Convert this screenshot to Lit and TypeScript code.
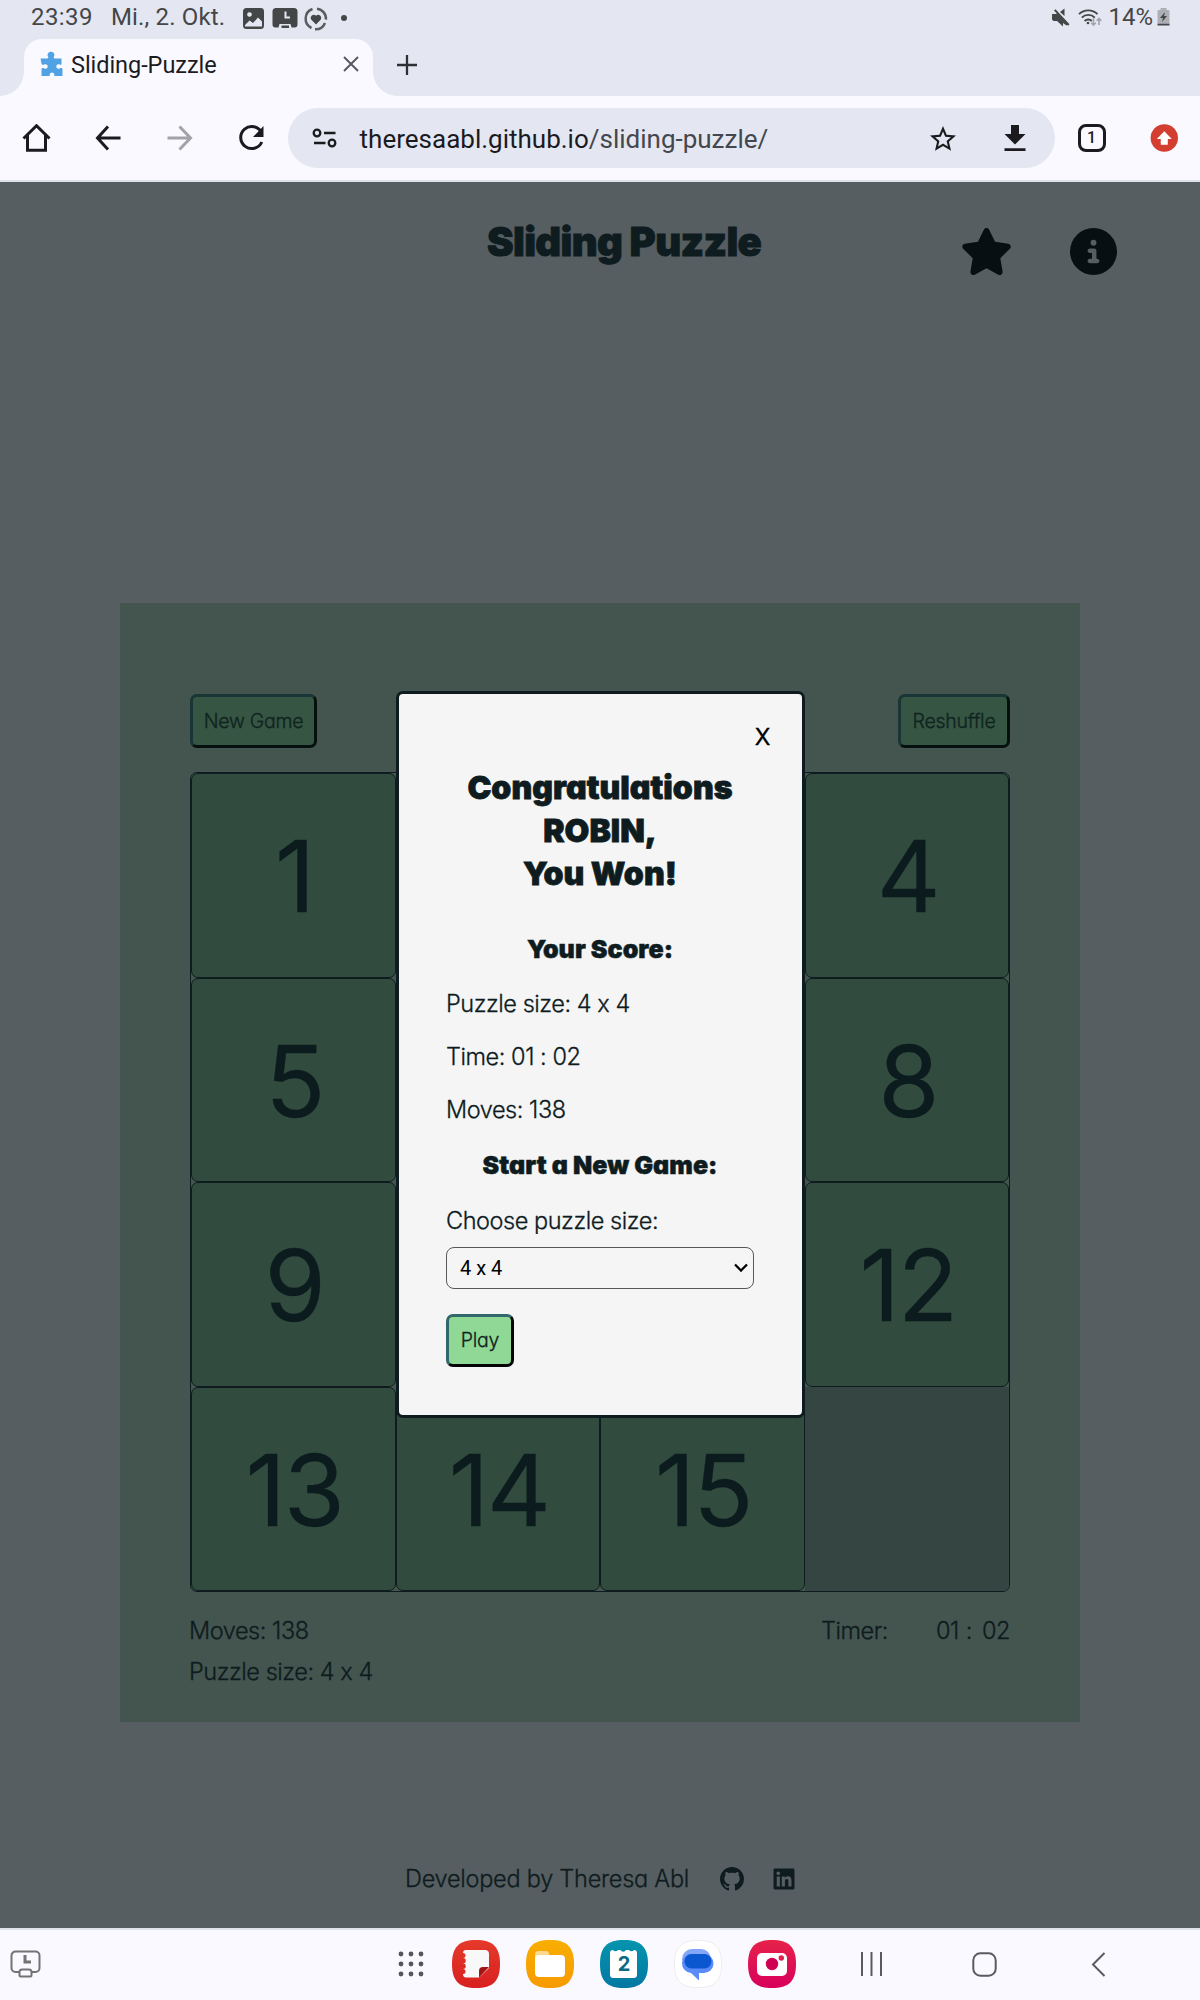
import { LitElement, html, svg, css } from "lit";
import { customElement } from "lit/decorators.js";

const app = (id: string, from: string, to: string, inner: unknown) => html`<svg viewBox="0 0 48 48" width="48" height="48">
  <defs>
    <linearGradient id=${id} x1="0" y1="0" x2="0" y2="1"><stop offset="0" stop-color=${from} /><stop offset="1" stop-color=${to} /></linearGradient>
  </defs>
  <path d="M24 0C41 0 48 7 48 24S41 48 24 48 0 41 0 24 7 0 24 0Z" fill=${`url(#${id})`} />
  ${inner}
</svg>`;

@customElement("system-status")
class SystemStatus extends LitElement {
  static styles = css`
    :host { display: flex; height: 39px; align-items: flex-start; background: #e4e7f1; color: #454648; font: 24px/35px Roboto, sans-serif; box-sizing: border-box; padding-left: 31px; }
    svg { display: block; flex: none; }
    .text { white-space: pre; display: block; }
    .clock { width: 80px; letter-spacing: 0.400px; }
    .date { width: 131px; letter-spacing: 0.150px; }
    .icons { display: flex; gap: 6px; padding-top: 7px; flex: 1; }
    .right { display: flex; padding-right: 30px; }
    .mute { margin: 8px 8px 0 0; }
    .wifi { margin: 8px 6px 0 0; }
    .percent { margin-right: 4px; }
    .battery { margin-top: 7px; }
  `;
  render() {
    return html`
      <span class="text clock">23:39</span>
      <span class="text date">Mi., 2. Okt.</span>
      <span class="icons">
        <svg width="24" height="24" viewBox="0 0 24 24"><path fill-rule="evenodd" fill="#454648" d="M4.500 1h14a3.500 3.500 0 0 1 3.500 3.500v14a3.500 3.500 0 0 1-3.500 3.500h-14a3.500 3.500 0 0 1-3.500-3.500v-14a3.500 3.500 0 0 1 3.500-3.500zM3 19.500h17v-5l-4-4-5 5.500-3.500-2.500-4.500 4.500zM7.500 5.200a2.300 2.300 0 1 0 .01 0z"/></svg>
        <svg width="26" height="24" viewBox="0 0 26 24"><path fill="#454648" d="M4 1h18a3.500 3.500 0 0 1 3.500 3.500v13a3 3 0 0 1-3 3h-3l-1-3.500h-11l-1 3.500h-3a3 3 0 0 1-3-3v-13a3.500 3.500 0 0 1 3.500-3.500z"/><path d="M13.500 4.500v6h4.500" fill="none" stroke="#e4e7f1" stroke-width="2"/><path d="M9.500 18.500h7.500v2.500h-7.500z" fill="#454648"/></svg>
        <svg width="24" height="24" viewBox="0 0 24 24"><g fill="none" stroke="#5c5d61" stroke-width="2.500"><path d="M8.500 2A10.300 10.300 0 0 0 7.500 21"/><path d="M13 1.700a10.300 10.300 0 0 1 9 11"/><path d="M21 16a10.300 10.300 0 0 1-10 6.300"/></g><path d="M12 17.500l-4.600-4.800c-2.300-2.700 1.800-7 4.600-4 2.800-3 6.900 1.300 4.600 4z" fill="#454648"/></svg>
        <svg width="18" height="24" viewBox="0 0 18 24"><circle cx="10" cy="11" r="3" fill="#454648"/></svg>
      </span>
      <span class="right">
        <svg class="mute" width="18" height="19" viewBox="0 0 18 19"><path fill="#454648" d="M0 6h4l2-1.500L16 16l-1.500 1.500L11 15v3.500L5 13H1.500L0 11.500zM8 4l4.500-3.500v7.500zM2 2.500l1.500-1.200 14 15-1.500 1.400z"/></svg>
        <svg class="wifi" width="24" height="19" viewBox="0 0 24 19"><g fill="none" stroke="#454648" stroke-width="1.900"><path d="M1 6.200a13 13 0 0 1 18.500 0"/><path d="M3.800 9.700a9 9 0 0 1 13 0"/><path d="M6.600 13a5 5 0 0 1 7.200 0"/></g><circle cx="10" cy="15" r="1.300" fill="#454648"/><path d="M15.500 10v7m-2.300-2.300 2.300 2.300 2.300-2.300M21 17v-6.500m-2.300 2.300 2.300-2.300 2.300 2.300" fill="none" stroke="#a0a3ac" stroke-width="1.600"/></svg>
        <span class="text percent">14%</span>
        <svg class="battery" width="13" height="20" viewBox="0 0 13 20"><path d="M3.500 1h6v2h-6zM1.500 3h10a1 1 0 0 1 1 1v12h-12v-12a1 1 0 0 1 1-1z" fill="#adafb5"/><path d="M.5 16.500h12v2h-12z" fill="#454648"/><path d="M8 5l-5 6h3l-1 4 5-6h-3z" fill="#454648"/></svg>
      </span>`;
  }
}

@customElement("browser-bar")
class BrowserBar extends LitElement {
  static styles = css`
    :host { display: block; font-family: Roboto, sans-serif; }
    svg { display: block; flex: none; }
    .tabs { height: 57px; background: #e4e7f1; display: flex; }
    .tab { width: 349px; box-sizing: border-box; background: #faf9ff; border-radius: 18px 18px 0 0; display: flex; padding-left: 14px; }
    .flare { align-self: flex-end; background: radial-gradient(circle at 0 0, #e4e7f1 23.500px, #faf9ff 24px); width: 24px; height: 24px; }
    .flare.end { background: radial-gradient(circle at 100% 0, #e4e7f1 23.500px, #faf9ff 24px); }
    .fav { margin: 12px 8px 0 1px; }
    .title { font-size: 23.500px; line-height: 53px; color: #1b1b1f; flex: 1; letter-spacing: -0.050px; }
    .close { margin: 17px 14px 0 0; }
    .plus { margin: 15px 0 0 -1.500px; }
    .bar { height: 86px; box-sizing: border-box; border-bottom: 2px solid #e0e2ea; background: #faf9ff; display: flex; align-items: center; padding: 0 22px 0 22px; }
    .navs { display: flex; gap: 43.500px; width: 266px; align-items: center; }
    .url { width: 768px; height: 60px; border-radius: 30px; background: #e4e7f1; display: flex; align-items: center; box-sizing: border-box; padding: 0 28px 0 24px; color: #1b1b1f; font-size: 26px; }
    .tune { margin-right: 22px; }
    .addr { flex: 1; line-height: 60px; padding-top: 2px; }
    .path { color: #44474f; }
    .star { margin-right: 47px; }
    .count { width: 28px; height: 28px; box-sizing: border-box; border: 3px solid #1b1b1f; border-radius: 8px; margin: 0 44.500px 0 23px; font: 500 16px/22px Roboto, sans-serif; text-align: center; color: #1b1b1f; }
  `;
  render() {
    return html`
      <div class="tabs">
        <span class="flare"></span>
        <div class="tab">
          <svg class="fav" width="24" height="26" viewBox="0 0 24 26"><path fill="#50a2e4" d="M1.500 7.500h6.500c1.500 0 1.600-.9 1-2-1.300-2.500.7-4.800 3-4.800s4.300 2.300 3 4.800c-.6 1.100-.5 2 1 2h6.500v5c0 1.500-.8 1.500-1.800 1-2.200-.9-3.400.4-3.400 1.900s1.200 2.900 3.400 2c1.300-.6 2.800-.4 2.800 1v6.600h-8.200v-1.500c0-2.700-4.600-2.700-4.600 0v1.500h-8.200v-6.600c0-1.400 1.500-1.600 2.800-1 2.200.9 3.400-.5 3.400-2s-1.200-2.800-3.400-1.900c-1 .5-2.800.5-2.800-1z"/></svg>
          <span class="title">Sliding-Puzzle</span>
          <svg class="close" width="16" height="16" viewBox="0 0 16 16"><path d="M1 1l14 14M15 1L1 15" stroke="#55575e" stroke-width="1.900"/></svg>
        </div>
        <span class="flare end"></span>
        <svg class="plus" width="22" height="22" viewBox="0 0 22 22"><path d="M11 1v20M1 11h20" stroke="#2e3036" stroke-width="2.300"/></svg>
      </div>
      <div class="bar">
        <div class="navs">
          <svg width="29" height="28" viewBox="0 0 29 28"><path d="M1.500 14.500L14.500 1.700 27.500 14.500M5.500 11v15.300h18V11" fill="none" stroke="#1b1b1f" stroke-width="3"/></svg>
          <svg width="28" height="28" viewBox="0 0 28 28"><path d="M25.500 14H3M13 2.500L2.500 14l10.500 11.500" fill="none" stroke="#1b1b1f" stroke-width="3"/></svg>
          <svg width="28" height="28" viewBox="0 0 28 28"><path d="M1.500 14h23M13.500 2.500L24.500 14l-11 11.500" fill="none" stroke="#a3a2a9" stroke-width="3"/></svg>
          <svg width="28" height="28" viewBox="0 0 28 28"><path d="M23.500 8.500A11 11 0 1 0 23.800 18" fill="none" stroke="#1b1b1f" stroke-width="3"/><path d="M25.500 2v11h-10.500z" fill="#1b1b1f"/></svg>
        </div>
        <div class="url">
          <svg class="tune" width="26" height="22" viewBox="0 0 26 22"><g fill="none" stroke="#1b1b1f" stroke-width="2.300"><circle cx="5" cy="6" r="3.300"/><circle cx="20" cy="16" r="3.300"/><path d="M12 6h11.500M2 16h11.500"/></g></svg>
          <span class="addr">theresaabl.github.io<span class="path">/sliding-puzzle/</span></span>
          <svg class="star" width="26" height="26" viewBox="0 0 24 24"><path fill="#1b1b1f" d="M22 9.240l-7.190-.62L12 2 9.190 8.630 2 9.240l5.460 4.730L5.820 21 12 17.270 18.180 21l-1.630-7.030L22 9.240zM12 15.400l-3.760 2.270 1-4.280-3.320-2.880 4.380-.38L12 6.100l1.710 4.040 4.380.38-3.320 2.880 1 4.280L12 15.400z" transform="translate(-2.400 -1.400) scale(1.200)"/></svg>
          <svg width="24" height="28" viewBox="0 0 24 28"><path d="M8 1h8v9h6.500L12 20.500 1.500 10H8zM1.500 24.300h21v2.700h-21z" fill="#1b1b1f"/></svg>
        </div>
        <div class="count">1</div>
        <svg width="28" height="28" viewBox="0 0 28 28"><circle cx="14.300" cy="14" r="13.700" fill="#d23f31"/><path d="M14.300 7.300l7.500 7.700h-4v5.700h-7V15h-4z" fill="#fff"/></svg>
      </div>`;
  }
}

@customElement("puzzle-page")
class PuzzlePage extends LitElement {
  static styles = css`
    :host { display: flex; flex-direction: column; height: 1746px; box-sizing: border-box; background: #565e61; position: relative; color: #0e1c1f; font: 300 23.500px/30px Inter, sans-serif; letter-spacing: -0.450px; font-feature-settings: "cv11", "calt" 0; -webkit-text-stroke: 0.300px; }
    svg { display: block; flex: none; }
    span { white-space: pre; }
    .top { display: flex; height: 421px; box-sizing: border-box; padding: 37px 0 0 487px; }
    .brand { font-weight: 900; font-size: 40px; line-height: 46px; width: 475px; margin: 0; letter-spacing: -0.650px; -webkit-text-stroke: 0.900px; }
    .info { margin-left: 57px; }
    .star { margin-left: -2px; }
    .star, .info { margin-top: 9px; }
    .panel { margin: 0 120px; height: 1119px; box-sizing: border-box; padding: 91px 70px 0; background: #44544e; }
    .row { display: flex; justify-content: space-between; }
    .btn { box-sizing: border-box; height: 54px; border: 3px solid; border-color: #1a3535 #06100f #06100f #1a3535; border-radius: 7px; background: #365542; color: #0f2420; font-size: 19.500px; line-height: 48px; letter-spacing: -0.250px; text-align: center; }
    .new { width: 127px; }
    .re { width: 112px; }
    .board { margin: 24px 0; height: 820px; box-sizing: border-box; border: 1px solid #0e1c1f; border-radius: 7px; background: #44544e; display: grid; grid-template: repeat(4, minmax(0, 1fr)) / repeat(4, minmax(0, 1fr)); overflow: hidden; }
    .tile { box-sizing: border-box; border: 1px solid #0e1c1f; border-radius: 7px; background: #314c3e; color: #0c1c1e; font-weight: 400; font-size: 99px; line-height: 205px; letter-spacing: -2px; padding-left: 2px; text-align: center; }
    .blank { background: #354642; border: 0; border-radius: 0; }
    .stats { margin-left: -1px; }
    .stat { height: 41px; }
    .timer { display: flex; }
    .min { margin-left: 48px; }
    .sep { margin: 0 10px 0 7px; }
    .foot { display: flex; align-items: center; padding: 142px 0 0 405px; letter-spacing: -0.250px; }
    .dev { width: 314.500px; }
    .gh { margin-right: 29.500px; }
    .modal { position: absolute; left: 396px; top: 509px; width: 409px; height: 727px; box-sizing: border-box; border: 3px solid #0e1c1f; border-radius: 7px; background: #f5f5f5; padding: 21px 48px 0 47px; }
    .x { height: 34px; margin-right: -16px; color: #000; text-align: right; font-size: 23px; line-height: 44px; font-weight: 400; }
    .win { font-weight: 900; font-size: 32px; line-height: 43px; text-align: center; margin: 17px -20px 36.500px; letter-spacing: 0.050px; -webkit-text-stroke: 0.800px; }
    h2 { font-weight: 900; font-size: 25px; line-height: 34px; text-align: center; margin: 0 -10px 23.500px; letter-spacing: 0.050px; -webkit-text-stroke: 0.500px; }
    p { margin: 0; height: 53px; }
    .ask { height: 41px; }
    .sel { height: 42px; box-sizing: border-box; border: 1px solid #55595c; border-radius: 8px; display: flex; justify-content: space-between; align-items: center; padding: 0 5px 0 13px; color: #000; font: 20px/40px Roboto, sans-serif; letter-spacing: 0; -webkit-text-stroke: 0; }
    .play { width: 68px; height: 53px; background: #90d896; border-color: #30686c #040404 #040404 #30686c; margin-top: 25px; line-height: 47px; }
  `;
  render() {
    return html`
      <div class="top">
        <h1 class="brand"><span>Sliding Puzzle</span></h1>
        <svg class="star" width="53" height="47" viewBox="0 0 576 512"><path fill="#080f12" d="M316.900 18C311.600 7 300.400 0 288.100 0s-23.400 7-28.800 18L195 150.300 51.400 171.500c-12 1.800-22 10.200-25.700 21.700s-.7 24.200 7.900 32.700L137.800 329 113.200 474.700c-2 12 3 24.200 12.900 31.300s23 8 33.800 2.300l128.300-68.500 128.300 68.500c10.800 5.700 23.900 4.900 33.800-2.300s14.900-19.300 12.900-31.300L438.500 329 542.700 225.900c8.600-8.500 11.700-21.200 7.900-32.700s-13.700-19.900-25.700-21.700L381.200 150.300 316.900 18z"/></svg>
        <svg class="info" width="47" height="47" viewBox="0 0 512 512"><path fill="#080f12" d="M256 512A256 256 0 1 0 256 0a256 256 0 1 0 0 512zM216 336h24V272H216c-13.300 0-24-10.700-24-24s10.700-24 24-24h48c13.300 0 24 10.700 24 24v88h8c13.300 0 24 10.700 24 24s-10.700 24-24 24H216c-13.300 0-24-10.700-24-24s10.700-24 24-24zm40-208a32 32 0 1 1 0 64 32 32 0 1 1 0-64z"/></svg>
      </div>
      <div class="panel">
        <div class="row">
          <div class="btn new">New Game</div>
          <div class="btn re">Reshuffle</div>
        </div>
        <div class="board">
          ${Array.from({ length: 15 }, (_, i) => {
            const covered = [2, 3, 6, 7, 10, 11].includes(i + 1);
            return html`<div class="tile">${covered ? "" : i + 1}</div>`;
          })}
          <div class="tile blank"></div>
        </div>
        <div class="row">
          <div class="stats"><div class="stat">Moves: 138</div><div class="stat">Puzzle size: 4 x 4</div></div>
          <div class="timer"><span>Timer:</span><span class="min">01</span><span class="sep">:</span><span>02</span></div>
        </div>
      </div>
      <div class="foot">
        <span class="dev">Developed by Theresa Abl</span>
        <svg class="gh" width="24" height="24" viewBox="0 0 16 16"><path fill="#0e1c1f" d="M8 0C3.580 0 0 3.580 0 8c0 3.540 2.290 6.530 5.470 7.590.4.070.55-.17.55-.38 0-.19-.01-.82-.01-1.490-2.010.37-2.530-.49-2.690-.94-.09-.23-.48-.94-.82-1.130-.28-.15-.68-.52-.01-.53.63-.01 1.080.58 1.230.82.72 1.210 1.870.87 2.330.66.07-.52.28-.87.51-1.070-1.780-.2-3.640-.89-3.640-3.950 0-.87.31-1.590.82-2.150-.08-.2-.36-1.020.08-2.120 0 0 .67-.21 2.200.82.64-.18 1.320-.27 2-.27s1.360.09 2 .27c1.530-1.040 2.200-.82 2.200-.82.44 1.100.16 1.920.08 2.120.51.56.82 1.270.82 2.150 0 3.070-1.870 3.750-3.650 3.950.29.25.54.73.54 1.480 0 1.070-.01 1.930-.01 2.200 0 .21.15.46.55.38A8.010 8.010 0 0 0 16 8c0-4.420-3.580-8-8-8z"/></svg>
        <svg width="22" height="24" viewBox="0 0 448 512"><path fill="#0e1c1f" d="M416 32H31.900C14.300 32 0 46.500 0 64.300v383.400C0 465.500 14.300 480 31.900 480H416c17.600 0 32-14.500 32-32.300V64.300c0-17.800-14.400-32.300-32-32.300zM135.400 416H69V202.200h66.500V416zm-33.200-243c-21.300 0-38.500-17.300-38.500-38.500S80.900 96 102.200 96c21.200 0 38.500 17.300 38.500 38.500 0 21.300-17.200 38.500-38.500 38.500zm282.100 243h-66.400V312c0-24.800-.5-56.700-34.500-56.700-34.600 0-39.900 27-39.900 54.900V416h-66.400V202.200h63.700v29.200h.9c8.900-16.800 30.600-34.500 62.900-34.500 67.200 0 79.700 44.300 79.700 101.900V416z"/></svg>
      </div>
      <div class="modal">
        <div class="x">X</div>
        <div class="win">Congratulations<br>ROBIN,<br>You Won!</div>
        <h2>Your Score:</h2>
        <p>Puzzle size: 4 x 4</p>
        <p>Time: 01 : 02</p>
        <p>Moves: 138</p>
        <h2>Start a New Game:</h2>
        <p class="ask">Choose puzzle size:</p>
        <div class="sel"><span>4 x 4</span><svg width="14" height="10" viewBox="0 0 14 10"><path d="M1 1.500l6 6 6-6" fill="none" stroke="#000" stroke-width="2.300"/></svg></div>
        <div class="btn play">Play</div>
      </div>`;
  }
}

@customElement("app-dock")
class AppDock extends LitElement {
  static styles = css`
    :host { display: flex; height: 72px; box-sizing: border-box; border-top: 2px solid #dfe2e8; background: #faf9ff; align-items: center; padding: 0 0 2px 10px; }
    svg { display: block; flex: none; }
    .rec { margin-right: 357px; }
    .dots { margin-right: 28px; }
    .apps { display: flex; gap: 26px; }
    .n1 { margin-left: 64px; }
    .n2 { margin-left: 88px; }
    .n3 { margin-left: 94px; }
    text { font: 700 20px Inter, sans-serif; }
  `;
  render() {
    return html`
      <svg class="rec" width="31" height="28" viewBox="0 0 31 28"><g fill="none" stroke="#737373" stroke-width="2"><path d="M9 22H5.500a4 4 0 0 1-4-4V5.500a4 4 0 0 1 4-4h20a4 4 0 0 1 4 4V18a4 4 0 0 1-4 4H22"/><path d="M12 19.500h7a2.500 2.500 0 0 1 2.500 2.500v3.500a1 1 0 0 1-1 1h-10a1 1 0 0 1-1-1V22a2.500 2.500 0 0 1 2.500-2.500z"/></g><path d="M15 5v7h6" fill="none" stroke="#737373" stroke-width="3"/></svg>
      <svg class="dots" width="26" height="26" viewBox="0 0 26 26">${[3, 13, 23].map((y) => [3, 13, 23].map((x) => svg`<circle cx=${x} cy=${y} r="2.400" fill="#55565a"/>`))}</svg>
      <div class="apps">
        ${app("notes", "#e53a2b", "#d82020", svg`<path d="M14 10h19a4 4 0 0 1 4 4v14l-10 9.500H14a3 3 0 0 1-3-3.500 2.500 2.500 0 0 0 0-5 2.500 2.500 0 0 0 0-5.500 2.500 2.500 0 0 0 0-5.500 2.500 2.500 0 0 0 0-5 3 3 0 0 1 3-3z" fill="#f8f8f8"/><path d="M27 37.500V31a4 4 0 0 1 4-4h6z" fill="#a31313"/>`)}
        ${app("files", "#f8ae00", "#f89a00", svg`<path d="M9 19v-5a3 3 0 0 1 3-3h8a3 3 0 0 1 3 3v3z" fill="#fcd98c"/><rect x="9" y="15" width="30" height="22" rx="4" fill="#fff"/>`)}
        ${app("calendar", "#0594ae", "#0478a2", svg`<path d="M10 13a3 3 0 0 1 3-3 3 3 0 0 0 5 0h2.500a3 3 0 0 0 5.500 0h3a3 3 0 0 0 5 0 3 3 0 0 1 3 3v21.500a3.500 3.500 0 0 1-3.500 3.500h-20a3.500 3.500 0 0 1-3.500-3.500z" fill="#fff"/><text x="24" y="31" text-anchor="middle" fill="#0b6a86">2</text>`)}
        ${app("messages", "#ffffff", "#ffffff", svg`<path d="M24 .5C41 .5 47.500 7 47.500 24S41 47.500 24 47.500 .5 41 .5 24 7 .5 24 .5Z" fill="none" stroke="#ececf0"/><rect x="8" y="9" width="29" height="20" rx="10" fill="#84a6f8"/><path d="M18 14h12a9.500 9.500 0 0 1 0 19h-5v7.500L17 33a9.500 9.500 0 0 1 1-19z" fill="#5a8bfb"/><rect x="10.500" y="14" width="27" height="14.500" rx="7.200" fill="#0b57d0"/>`)}
        ${app("camera", "#e6224a", "#d8005c", svg`<rect x="9" y="13" width="30" height="23" rx="5" fill="#fff"/><circle cx="24" cy="24" r="6.200" fill="#d00052"/><circle cx="33.300" cy="18" r="2.700" fill="#e02050"/>`)}
      </div>
      <svg class="n1" width="24" height="24" viewBox="0 0 24 24"><path d="M2 0v24M11.500 0v24M21 0v24" stroke="#5a5b5f" stroke-width="2"/></svg>
      <svg class="n2" width="25" height="25" viewBox="0 0 25 25"><rect x="1.300" y="1.300" width="22.400" height="22.400" rx="7" fill="none" stroke="#5a5b5f" stroke-width="2"/></svg>
      <svg class="n3" width="15" height="25" viewBox="0 0 15 25"><path d="M13.500 1L2 12.500l11.500 11.500" fill="none" stroke="#5a5b5f" stroke-width="2"/></svg>`;
  }
}

@customElement("app-root")
class AppRoot extends LitElement {
  static styles = css`
    :host { display: block; width: 1200px; height: 2000px; overflow: hidden; }
  `;
  render() {
    return html`<system-status></system-status><browser-bar></browser-bar><puzzle-page></puzzle-page><app-dock></app-dock>`;
  }
}
